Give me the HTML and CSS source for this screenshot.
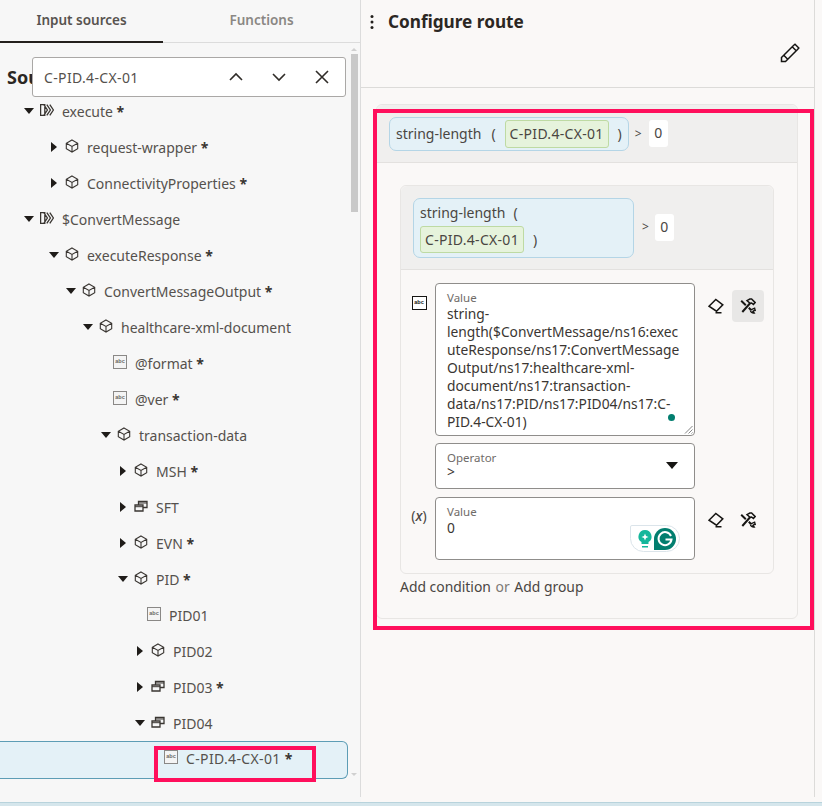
FILE: index.html
```html
<!DOCTYPE html>
<html lang="en">
<head>
<meta charset="utf-8">
<title>Configure route</title>
<link rel="stylesheet" href="styles.css">
</head>
<body>
<svg class="defs" width="0" height="0" aria-hidden="true">
  <symbol id="cube" viewBox="0 0 14 14"><path d="M7 1 12.700 4.200V9.800L7 13 1.300 9.800V4.200ZM1.300 4.200 7 7.400 12.700 4.200M7 7.400V13" fill="none" stroke="currentColor" stroke-width="1.100"/></symbol>
  <symbol id="flow" viewBox="0 0 14 14"><path d="M.6 1.600H4.800V12.400H.6ZM3.800 1.600 7.400 7 3.800 12.400M6.800 1.600 10.400 7 6.800 12.400M9.800 1.600 13.400 7 9.800 12.400" fill="none" stroke="currentColor" stroke-width="1.300"/></symbol>
  <symbol id="group" viewBox="0 0 14 14"><path d="M1 6H9V12H1ZM4.500 6V2.500H13V8.500H9" fill="none" stroke="currentColor" stroke-width="1.300"/><path d="M4.500 4H13M1 7.700H9" stroke="currentColor" stroke-width="1"/></symbol>
  <symbol id="eraser" viewBox="0 0 16 16"><path d="M1 8.200 7.800 1.500 14.800 6.800 8.500 13.200ZM7.500 14.800H13.500" fill="none" stroke="currentColor" stroke-width="1.500"/></symbol>
  <symbol id="tools" viewBox="0 0 16 16"><path d="M7 2.600 9.800 1H11.600L15.200 4.600 13.400 6.400 11.500 5 10 5.200Z" fill="none" stroke="currentColor" stroke-width="1.500"/><path d="M10.300 5 2.300 14M1.200 2.800 5.800 7.200M8.800 9.800 11 12" fill="none" stroke="currentColor" stroke-width="2"/><path d="M10.800 11.800 14.600 10.200 15.200 12.500 13.400 12.900 12.900 13.500 14.200 15A3.200 3.200 0 0 1 10.400 12.300" fill="none" stroke="currentColor" stroke-width="1.400"/></symbol>
</svg>

<aside class="left">
  <div class="left-panel">
  <nav class="tabs">
    <div class="tab active">Input sources</div>
    <div class="tab">Functions</div>
  </nav>
  <div class="tree-wrap">
    <h2 class="sources">Sou</h2>
    <div class="tree">
      <div class="row p0"><i class="tw down"></i><svg class="ic"><use href="#flow"/></svg><span>execute <em class="req">*</em></span></div>
      <div class="row p1"><i class="tw side-arrow"></i><svg class="ic"><use href="#cube"/></svg><span>request-wrapper <em class="req">*</em></span></div>
      <div class="row p1"><i class="tw side-arrow"></i><svg class="ic"><use href="#cube"/></svg><span>ConnectivityProperties <em class="req">*</em></span></div>
      <div class="row p0"><i class="tw down"></i><svg class="ic"><use href="#flow"/></svg><span>$ConvertMessage</span></div>
      <div class="row p1"><i class="tw down"></i><svg class="ic"><use href="#cube"/></svg><span>executeResponse <em class="req">*</em></span></div>
      <div class="row p2"><i class="tw down"></i><svg class="ic"><use href="#cube"/></svg><span>ConvertMessageOutput <em class="req">*</em></span></div>
      <div class="row p3"><i class="tw down"></i><svg class="ic"><use href="#cube"/></svg><span>healthcare-xml-document</span></div>
      <div class="row l4"><b class="abc">abc</b><span>@format <em class="req">*</em></span></div>
      <div class="row l4"><b class="abc">abc</b><span>@ver <em class="req">*</em></span></div>
      <div class="row p4"><i class="tw down"></i><svg class="ic"><use href="#cube"/></svg><span>transaction-data</span></div>
      <div class="row p5"><i class="tw side-arrow"></i><svg class="ic"><use href="#cube"/></svg><span>MSH <em class="req">*</em></span></div>
      <div class="row p5"><i class="tw side-arrow"></i><svg class="ic"><use href="#group"/></svg><span>SFT</span></div>
      <div class="row p5"><i class="tw side-arrow"></i><svg class="ic"><use href="#cube"/></svg><span>EVN <em class="req">*</em></span></div>
      <div class="row p5"><i class="tw down"></i><svg class="ic"><use href="#cube"/></svg><span>PID <em class="req">*</em></span></div>
      <div class="row l6"><b class="abc">abc</b><span>PID01</span></div>
      <div class="row p6"><i class="tw side-arrow"></i><svg class="ic"><use href="#cube"/></svg><span>PID02</span></div>
      <div class="row p6"><i class="tw side-arrow"></i><svg class="ic"><use href="#group"/></svg><span>PID03 <em class="req">*</em></span></div>
      <div class="row p6"><i class="tw down"></i><svg class="ic"><use href="#group"/></svg><span>PID04</span></div>
      <div class="row l7 selected"><b class="abc">abc</b><span>C-PID.4-CX-01 <em class="req">*</em></span></div>
    </div>
    <div class="scrollbar"><i class="sb-up"></i><div class="thumb"></div><i class="sb-down"></i></div>
    <div class="search">
      <span class="search-text">C-PID.4-CX-01</span>
      <svg class="search-ic" viewBox="0 0 16 16"><path d="M2 11 8 5 14 11" fill="none" stroke="currentColor" stroke-width="1.600"/></svg>
      <svg class="search-ic" viewBox="0 0 16 16"><path d="M2 5 8 11 14 5" fill="none" stroke="currentColor" stroke-width="1.600"/></svg>
      <svg class="search-ic" viewBox="0 0 16 16"><path d="M2 2 14 14M14 2 2 14" fill="none" stroke="currentColor" stroke-width="1.600"/></svg>
    </div>
    <div class="mark mark-tree"></div>
  </div>
  </div>
</aside>

<main class="main">
  <header class="head">
    <div class="title-row">
      <svg class="dots" viewBox="0 0 4 16"><circle cx="2" cy="2.500" r="1.500"/><circle cx="2" cy="8" r="1.500"/><circle cx="2" cy="13.500" r="1.500"/></svg>
      <h1>Configure route</h1>
    </div>
    <div class="pencil-row">
      <svg class="pencil" viewBox="0 0 20 20"><path d="M1.500 14.500 13.500 2.500 15 1.200 18.800 5 17.500 6.500 5.500 18.500H1.500ZM12.200 3.800 16.200 7.800M3.800 12.300 7.700 16.200" fill="none" stroke="currentColor" stroke-width="1.500"/></svg>
    </div>
  </header>
  <section class="outer">
    <div class="band">
      <div class="chip"><span>string-length</span><span class="paren">(</span><span class="var">C-PID.4-CX-01</span><span class="paren">)</span></div>
      <span class="op">&gt;</span><span class="num">0</span>
    </div>
    <div class="outer-body">
      <div class="inner">
        <div class="band band2">
          <div class="chip chip2"><span>string-length</span><span class="paren">(</span><span class="var">C-PID.4-CX-01</span><span class="paren">)</span></div>
          <span class="op">&gt;</span><span class="num">0</span>
        </div>
        <div class="fields">
          <div class="field-row">
            <div class="side"><b class="abc abc-dark">abc</b></div>
            <div class="field area">
              <label>Value</label>
              <div class="val">string-<br>length($ConvertMessage/ns16:exec<br>uteResponse/ns17:ConvertMessage<br>Output/ns17:healthcare-xml-<br>document/ns17:transaction-<br>data/ns17:PID/ns17:PID04/ns17:C-<br>PID.4-CX-01)</div>
              <i class="gdot"></i>
              <svg class="grip" viewBox="0 0 9 9"><path d="M8.500 1 1 8.500M8.500 4.500 4.500 8.500M8.500 7.500 7.500 8.500" stroke="#666" stroke-width=".8"/></svg>
            </div>
            <div class="actions">
              <span class="act"><svg><use href="#eraser"/></svg></span>
              <span class="act on"><svg><use href="#tools"/></svg></span>
            </div>
          </div>
          <div class="field-row op-row">
            <div class="side"></div>
            <div class="field sel">
              <label>Operator</label>
              <div class="val">&gt;</div>
              <i class="caret"></i>
            </div>
            <div class="actions"></div>
          </div>
          <div class="field-row">
            <div class="side"><span class="x">(<i>x</i>)</span></div>
            <div class="field num-field">
              <label>Value</label>
              <div class="val">0</div>
              <div class="gram">
                <svg width="16" height="20" viewBox="0 0 16 20"><path d="M8 1a6.500 6.500 0 0 0-3.500 12V15h7v-2A6.500 6.500 0 0 0 8 1ZM5 17h6v1.500H5Z" fill="#15b79b"/><path d="M8 4.500 9 7l2.500 1L9 9l-1 2.500L7 9 4.500 8 7 7Z" fill="#fff"/></svg>
                <svg width="22" height="22" viewBox="0 0 22 22"><path d="M11 0a11 11 0 0 1 0 22H0V11A11 11 0 0 1 11 0Z" fill="#027e6f"/><path d="M17 8a6.500 6.500 0 1 0 .5 3.500H11.500" fill="none" stroke="#fff" stroke-width="2"/></svg>
              </div>
            </div>
            <div class="actions">
              <span class="act"><svg><use href="#eraser"/></svg></span>
              <span class="act"><svg><use href="#tools"/></svg></span>
            </div>
          </div>
        </div>
      </div>
      <p class="add"><span>Add condition</span> <span class="or">or</span> <span>Add group</span></p>
    </div>
  </section>
  <div class="mark mark-main"></div>
</main>
</body>
</html>
```
FILE: styles.css
```css
* { box-sizing: border-box; }
html, body { margin: 0; height: 100%; }
body {
  display: flex;
  width: 822px;
  height: 806px;
  overflow: hidden;
  background: #faf8f7;
  font-family: "Noto Sans", "Open Sans", sans-serif;
  font-size: 14px;
  color: #4a4642;
  position: relative;
}
body::after {
  content: "";
  position: absolute;
  left: 0; right: 0; bottom: 0;
  height: 3px;
  background: #d5e6ec;
  border-top: 1px solid #b8d3dc;
}
.defs { position: absolute; }

/* left panel */
.left {
  width: 361px;
  background: #f7f7f7;
  flex: none;
}
.left-panel {
  height: 797px;
  border-right: 1px solid #dcdcdc;
  display: flex;
  flex-direction: column;
}
.tabs { display: flex; height: 43px; border-bottom: 1px solid #dcdcdc; flex: none; }
.tab {
  width: 163px;
  height: 43px;
  line-height: 40px;
  text-align: center;
  font-weight: 600;
  font-size: 13.500px;
  color: #8a8784;
}
.tab + .tab { width: 197px; }
.tab.active { color: #57534f; border-bottom: 2px solid #24201d; }
.tree-wrap { position: relative; flex: 1; }
.sources {
  margin: 0;
  position: absolute;
  left: 7px;
  top: 21px;
  font-size: 18px;
  line-height: 26px;
  font-weight: 700;
  color: #2b2723;
}
.tree { padding-top: 51px; }
.row {
  height: 36px;
  display: flex;
  align-items: center;
  width: 348px;
  color: #55514d;
}
.row span { position: relative; top: -1px; }
.req { font-style: normal; font-weight: 700; color: #3a3632; }
.p0 { padding-left: 23px; }
.p1 { padding-left: 48px; }
.p2 { padding-left: 65px; }
.p3 { padding-left: 82px; }
.p4 { padding-left: 100px; }
.p5 { padding-left: 117px; }
.p6 { padding-left: 134px; }
.l4 { padding-left: 113px; }
.l6 { padding-left: 147px; }
.l7 { padding-left: 164px; }
.tw { width: 17px; flex: none; height: 10px; position: relative; display: block; top: -1px; }
.tw::before {
  content: "";
  position: absolute;
  border-style: solid;
  border-color: transparent;
}
.tw.down::before { left: 1px; top: 2px; border-width: 6px 5px 0; border-top-color: #1f1c19; }
.tw.side-arrow::before { left: 3px; top: 0; border-width: 5px 0 5px 6px; border-left-color: #1f1c19; }
.ic { width: 14px; height: 14px; flex: none; margin-right: 8px; color: #3a3632; position: relative; top: -2px; }
.abc {
  width: 14px;
  height: 14px;
  flex: none;
  margin-right: 8px;
  border: 1.500px solid #8a8886;
  font: 700 5.500px/10px "Liberation Sans", sans-serif;
  color: #6b6966;
  text-align: center;
  background: #f4f4f4;
  position: relative;
  top: -2px;
}
.selected {
  background: #e4f1f7;
  border: 1px solid #5d9db5;
  border-left: 0;
  border-radius: 0 6px 6px 0;
  height: 38px;
  margin-top: -1px;
  align-items: flex-start;
  padding-top: 8px;
}
.selected .abc { top: 0; }
.selected span { top: -1px; letter-spacing: .35px; }
.scrollbar {
  position: absolute;
  left: 350px;
  top: 2px;
  width: 8px;
  height: 734px;
  display: flex;
  flex-direction: column;
}
.thumb { width: 7px; height: 158px; background: #c9c9c9; margin-top: 9px; margin-left: 1px; }
.sb-up, .sb-down { position: absolute; left: 1px; border: 3px solid transparent; }
.sb-up { top: 0; border-bottom: 3px solid #d0d0d0; }
.sb-down { bottom: 0; border-top: 3px solid #d0d0d0; }
.search {
  position: absolute;
  left: 32px;
  top: 14px;
  width: 314px;
  height: 40px;
  background: #fff;
  border: 1px solid #aaa8a6;
  border-radius: 3px;
  display: flex;
  align-items: center;
  padding: 0 15px 0 11px;
  gap: 27px;
  color: #302c28;
}
.search-text { flex: 1; font-size: 14px; color: #55514d; letter-spacing: .35px; }
.search-ic { width: 16px; height: 16px; flex: none; }
.mark { position: absolute; border: 4px solid #ff0f5c; pointer-events: none; }
.mark-tree { left: 154px; top: 703px; width: 162px; height: 36px; }

/* right panel */
.main {
  width: 454px;
  height: 797px;
  background: #faf8f7;
  border-right: 1px solid #dcdbd9;
  position: relative;
  flex: none;
}
.head { height: 88px; border-bottom: 1px solid #dcdbd9; }
.title-row { display: flex; align-items: center; height: 42px; padding-left: 9px; }
.dots { width: 4px; height: 16px; fill: #23201d; margin-right: 14px; position: relative; top: 1px; }
h1 { margin: 0; font-size: 17.200px; font-weight: 700; color: #2b2723; }
.pencil-row { display: flex; justify-content: flex-end; padding: 1px 14px 0 0; color: #161513; }
.pencil { width: 20px; height: 20px; }
.outer {
  margin: 16px 16px 0 15px;
  height: 515px;
  border: 1px solid #e8e6e4;
  border-radius: 6px;
}
.band {
  background: #f0efee;
  height: 58px;
  padding: 12px 12px 0;
  display: flex;
  align-items: flex-start;
  border-bottom: 1px solid #e3e1df;
  border-radius: 6px 6px 0 0;
}
.chip {
  height: 34px;
  background: #e4f1f7;
  border: 1px solid #b4d5e6;
  border-radius: 7px;
  padding: 0 6px;
  display: flex;
  align-items: center;
  line-height: 28px;
}
.paren { margin-left: 10px; }
.var {
  margin-left: 9px;
  background: #e6f3dc;
  border: 1px solid #bedaa3;
  border-radius: 3px;
  height: 28px;
  padding: 0 4px;
  line-height: 26px;
  letter-spacing: .3px;
}
.var + .paren { margin-left: 9px; }
.op { font-size: 12px; margin: 7px 7px 0 6px; line-height: 20px; }
.num {
  width: 19px;
  height: 27px;
  background: #fff;
  margin-top: 3px;
  border-radius: 3px;
  text-align: center;
  line-height: 25px;
}
.outer-body { padding: 22px 23px 0; }
.inner {
  width: 374px;
  height: 389px;
  border: 1px solid #e8e6e4;
  border-radius: 6px;
}
.band2 { height: 84px; padding: 0 12px; align-items: center; }
.chip2 {
  width: 221px;
  height: 60px;
  flex-wrap: wrap;
  padding: 0 6px 2px;
  line-height: 26px;
  align-content: center;
}
.chip2 .var { margin-left: 0; height: 27px; }
.chip2 .paren:nth-child(2) { margin: 0 60px 0 8px; }
.band2 .op { margin: -2px 6px 0 8px; }
.band2 .num { margin: -1px 0 0; }
.fields { padding-top: 13px; display: flex; flex-direction: column; gap: 8px; }
.field-row { display: flex; }
.op-row { margin-top: -1px; }
.side { width: 34px; flex: none; display: flex; justify-content: center; padding: 13px 0 0 2px; }
.abc-dark { border: 1.500px solid #161513; color: #161513; background: #fff; margin: 0; top: 0; width: 15px; }
.x { font-size: 14px; margin-top: -4px; }
.x i { font-style: italic; font-weight: 500; }
.field {
  width: 260px;
  flex: none;
  background: #fff;
  border: 1px solid #8f8d8b;
  border-radius: 4px;
  padding: 7px 11px;
  position: relative;
}
.field label { display: block; font-size: 11.500px; line-height: 14px; color: #6f6b68; }
.val { font-size: 13.800px; line-height: 18px; color: #3a3632; }
.area { height: 153px; }
.sel { height: 46px; }
.sel .val { line-height: 14px; }
.num-field { height: 63px; }
.gdot { position: absolute; right: 19px; bottom: 14px; width: 7px; height: 7px; border-radius: 50%; background: #027e6f; }
.grip { position: absolute; right: 1px; bottom: 1px; width: 9px; height: 9px; }
.caret {
  position: absolute;
  right: 16px;
  top: 18px;
  border-style: solid;
  border-width: 7px 6px 0;
  border-color: #161513 transparent transparent;
}
.gram {
  position: absolute;
  right: 14px;
  bottom: 7px;
  width: 50px;
  height: 27px;
  display: flex;
  align-items: center;
  justify-content: space-between;
  padding: 0 3px 0 6px;
  background: #fff;
  border: 1px solid #dbe4ea;
  border-radius: 2px 14px 14px 14px;
}
.actions { display: flex; margin-left: 5px; padding-top: 7px; align-items: flex-start; }
.act {
  width: 32px;
  height: 32px;
  display: flex;
  align-items: center;
  justify-content: center;
  border-radius: 4px;
  color: #161513;
}
.act.on { background: #e8e7e6; }
.act svg { width: 16px; height: 16px; }
.add { margin: 3px 0 0; line-height: 20px; font-size: 13.900px; }
.or { color: #7d7975; margin: 0 1px; }
.mark-main { left: 12px; top: 109px; width: 441px; height: 521px; }
```
